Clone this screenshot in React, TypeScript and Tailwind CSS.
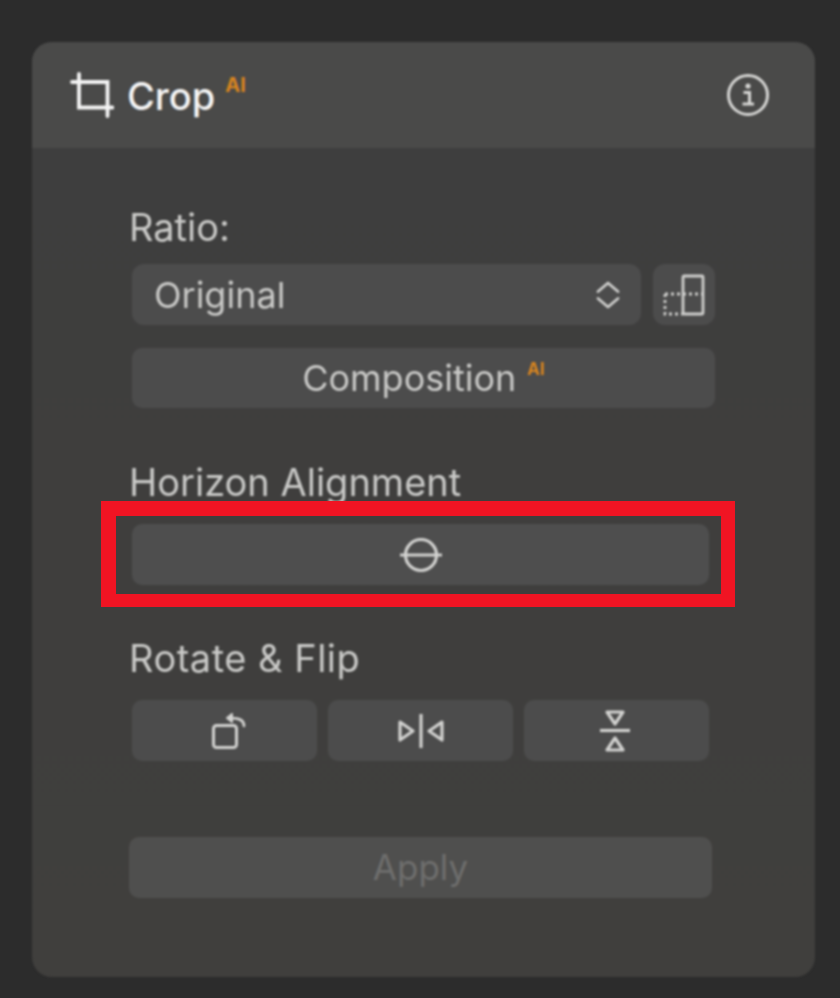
const font = { fontFamily: '"Inter", "Liberation Sans", sans-serif' };

function CropIcon() {
  return (
    <svg width="44" height="46" viewBox="0 0 44 46" fill="none" stroke="#f4f4f4" strokeWidth="3.8" strokeLinecap="round">
      <path d="M2 10H37.5V44" />
      <path d="M9 2V35.5H42.5" />
    </svg>
  );
}

function InfoIcon() {
  return (
    <svg width="44" height="44" viewBox="0 0 44 44" fill="none">
      <circle cx="22" cy="22" r="19.5" stroke="#d6d6d4" strokeWidth="3" />
      <circle cx="22" cy="13" r="2.6" fill="#d6d6d4" />
      <path d="M17.5 19.5H23.5V30M16.5 31H28" stroke="#d6d6d4" strokeWidth="3" />
    </svg>
  );
}

function Chevrons() {
  return (
    <svg width="24" height="28" viewBox="0 0 24 28" fill="none" stroke="#cfcfcd" strokeWidth="2.8" strokeLinecap="round" strokeLinejoin="round">
      <path d="M2 10.5L12 2L22 10.5" />
      <path d="M2 17.5L12 26L22 17.5" />
    </svg>
  );
}

function OrientationIcon() {
  return (
    <svg width="42" height="42" viewBox="0 0 42 42" fill="none" stroke="#cfcfcd">
      <rect x="20" y="2" width="20" height="38" strokeWidth="2.8" rx="1" />
      <path d="M2 20H40M2 20V40H20" strokeWidth="2.8" strokeDasharray="3 3" />
    </svg>
  );
}

function HorizonIcon() {
  return (
    <svg width="44" height="36" viewBox="0 0 44 36" fill="none" stroke="#d2d2d0" strokeWidth="3.2">
      <circle cx="22" cy="18" r="15.5" />
      <path d="M1 18H43" />
    </svg>
  );
}

function RotateIcon() {
  return (
    <svg width="34" height="36" viewBox="0 0 34 36" fill="none" stroke="#d2d2d0" strokeLinejoin="round" strokeLinecap="round">
      <rect x="1.5" y="12.5" width="23" height="22" rx="3" strokeWidth="3" />
      <path d="M32 13C32 7 27 5 19 5" strokeWidth="2.6" />
      <path d="M20 1L15 5L20 9Z" strokeWidth="2" fill="#d2d2d0" />
    </svg>
  );
}

function FlipHIcon() {
  return (
    <svg width="46" height="36" viewBox="0 0 46 36" fill="none" stroke="#d2d2d0" strokeWidth="3.2" strokeLinejoin="round">
      <path d="M23 1V35" />
      <path d="M2 9L15 18L2 27Z" />
      <path d="M44 9L31 18L44 27Z" />
    </svg>
  );
}

function FlipVIcon() {
  return (
    <svg width="30" height="42" viewBox="0 0 30 42" fill="none" stroke="#d2d2d0" strokeWidth="3.2" strokeLinejoin="round">
      <path d="M0 20.5H30" />
      <path d="M7 2H23L15 14Z" />
      <path d="M7 40H23L15 28Z" />
    </svg>
  );
}

function AiBadge({ className }: { className: string }) {
  return <span className={`font-bold leading-none text-[#d9851f] ${className}`}>AI</span>;
}

export default function App() {
  return (
    <div style={font} className="w-[840px] h-[998px] overflow-hidden bg-[#2c2c2c] pt-[42px] pl-[32px]">
      <div className="relative w-[783px] h-[935px] rounded-[20px] overflow-hidden bg-gradient-to-b from-[#3e3e3e] to-[#403f3d] blur-[0.8px]">
        <header className="h-[106px] bg-[#4a4a49] flex items-center pl-[38px] pr-[45px]">
          <CropIcon />
          <span className="ml-[13px] text-[38px] leading-none font-medium text-[#f5f5f5] translate-y-[1px]">Crop</span>
          <AiBadge className="ml-[10px] mb-[20px] text-[20px]" />
          <span className="ml-auto flex">
            <InfoIcon />
          </span>
        </header>

        <div className="pl-[100px] flex flex-col">
          <label className="mt-[56px] -ml-[3px] h-[47px] text-[38px] leading-[47px] text-[#c9c9c7]">Ratio:</label>
          <div className="mt-[13px] flex gap-[12px] w-[583px]">
            <div className="flex-1 h-[61px] rounded-[12px] bg-[#4c4c4c] flex items-center justify-between pl-[22px] pr-[21px] text-[36px] text-[#c9c9c7]">
              <span>Original</span>
              <Chevrons />
            </div>
            <div className="w-[62px] h-[61px] rounded-[12px] bg-[#4c4c4c] flex items-center justify-center">
              <OrientationIcon />
            </div>
          </div>
          <div className="mt-[23px] w-[583px] h-[60px] rounded-[10px] bg-[#4c4c4c] flex items-center justify-center text-[36px] text-[#c9c9c7]">
            <span>Composition</span>
            <AiBadge className="ml-[11px] mb-[18px] text-[17px]" />
          </div>

          <label className="mt-[51px] -ml-[3px] h-[47px] text-[38px] leading-[47px] text-[#c9c9c7]">Horizon Alignment</label>
          <div className="mt-[18px] w-[577px] h-[61px] rounded-[10px] bg-[#4e4e4e] flex items-center justify-center">
            <HorizonIcon />
          </div>

          <label className="mt-[50px] -ml-[3px] h-[47px] text-[38px] leading-[47px] tracking-[0.5px] text-[#c9c9c7]">Rotate &amp; Flip</label>
          <div className="mt-[18px] w-[577px] grid grid-cols-3 gap-[11px]">
            <div className="h-[61px] rounded-[10px] bg-[#4c4c4c] flex items-center justify-center pl-[8px]"><RotateIcon /></div>
            <div className="h-[61px] rounded-[10px] bg-[#4c4c4c] flex items-center justify-center"><FlipHIcon /></div>
            <div className="h-[61px] rounded-[10px] bg-[#4c4c4c] flex items-center justify-center pr-[3px]"><FlipVIcon /></div>
          </div>

          <div className="mt-[76px] -ml-[3px] w-[583px] h-[61px] rounded-[10px] bg-[#4f4f4e] flex items-center justify-center text-[35px] text-[#6e6e6d]">
            Apply
          </div>
        </div>
      </div>

      <div className="absolute left-[101px] top-[501px] w-[634px] h-[106px] border-t-[15px] border-r-[14px] border-b-[13px] border-l-[15px] border-[#f01423]" />
    </div>
  );
}
